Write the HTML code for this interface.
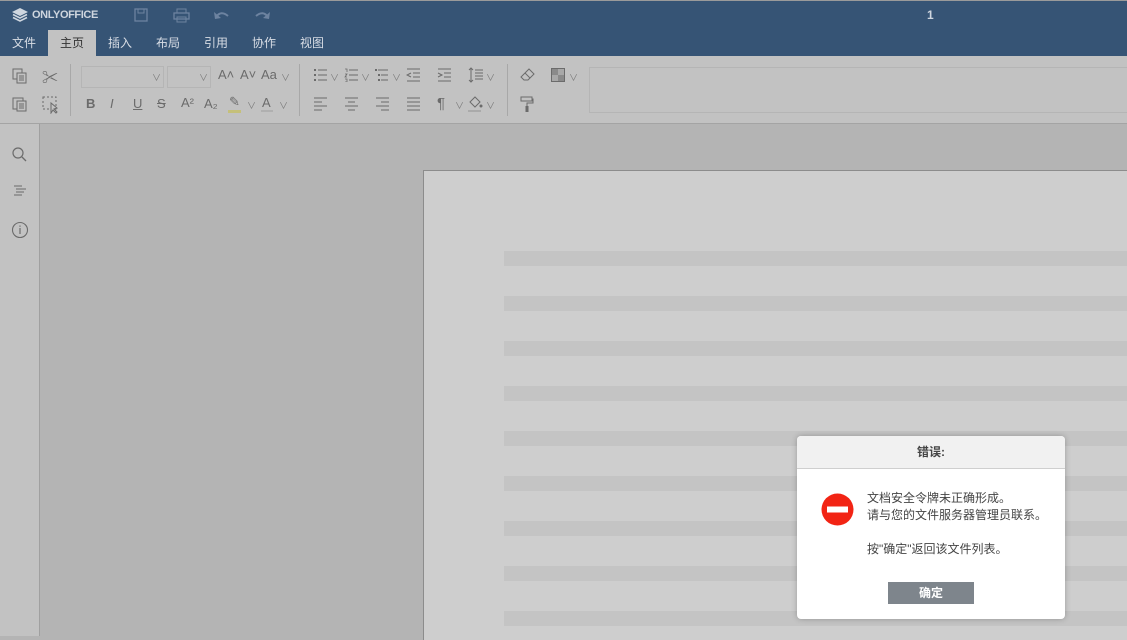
<!DOCTYPE html>
<html><head><meta charset="utf-8"><style>
*{margin:0;padding:0;box-sizing:border-box}
body{width:1127px;height:636px;overflow:hidden;position:relative;background:#b4b4b4;font-family:"Liberation Sans","Noto Sans CJK SC",sans-serif}
.hdr{position:absolute;left:0;top:0;width:1127px;height:56px;background:#365475;border-top:1px solid #9a9a9a}
.logo{position:absolute;left:12px;top:7px;color:#cfd6df;font-weight:bold;font-size:11px;letter-spacing:-0.4px;display:flex;align-items:center;gap:4px}
.tabs{position:absolute;left:0;top:29px;height:27px;display:flex}
.tab{width:48px;text-align:center;line-height:27px;font-size:12px;color:#d8dde5}
.tab.act{background:#c2c2c2;color:#333}
.num{position:absolute;left:927px;top:7px;color:#cfd6df;font-size:12px;font-weight:bold}
.tb{position:absolute;left:0;top:56px;width:1127px;height:68px;background:#c2c2c2;border-bottom:1px solid #a4a4a4}
.ic{position:absolute;color:#6b6b6b;font-size:13px}
.sv{position:absolute}
.sep{position:absolute;width:1px;height:52px;background:#a8a8a8}
.box{position:absolute;border:1px solid #b5b5b5;background:#c2c2c2}
.left{position:absolute;left:0;top:124px;width:40px;height:512px;background:#c2c2c2;border-right:1px solid #a0a0a0}
.page{position:absolute;left:423px;top:170px;width:710px;height:470px;background:#cecece;border-left:1px solid #8c8c8c;border-top:1px solid #8c8c8c}
.stripe{position:absolute;left:504px;width:623px;height:15px;background:#c4c4c4}
.dlg{position:absolute;left:797px;top:436px;width:268px;height:183px;background:#fff;border-radius:4px;box-shadow:0 0 6px rgba(0,0,0,.25);overflow:hidden}
.dh{height:33px;background:#f1f1f1;border-bottom:1px solid #cfcfcf;text-align:center;line-height:33px;font-size:12px;font-weight:bold;color:#444}
.msg{position:absolute;left:70px;top:54px;font-size:12px;color:#444;line-height:17px}
.btn{position:absolute;left:91px;top:146px;width:86px;height:22px;background:#7e858c;color:#fff;font-size:12px;font-weight:bold;text-align:center;line-height:22px}
.dd{position:absolute;color:#7a7a7a;font-size:9px}
</style></head><body>
<div class="hdr">
 <div class="logo"><svg width="16" height="14" viewBox="0 0 16 14"><path d="M8 0L16 4 8 8 0 4Z" fill="#cfd6df"/><path d="M1 6.5L8 10 15 6.5M1 9.5L8 13 15 9.5" stroke="#cfd6df" stroke-width="1.6" fill="none"/></svg>ONLYOFFICE</div>
 <svg style="position:absolute;left:134px;top:7px" width="14" height="14"><rect x="1" y="1" width="12" height="12" fill="none" stroke="#6d83a0" stroke-width="1.3"/><rect x="4" y="1" width="6" height="4" fill="none" stroke="#6d83a0"/></svg>
 <svg style="position:absolute;left:173px;top:7px" width="17" height="15"><rect x="4" y="1" width="9" height="4" fill="none" stroke="#6d83a0"/><rect x="1" y="5" width="15" height="6" fill="none" stroke="#6d83a0" stroke-width="1.3"/><rect x="4" y="9" width="9" height="5" fill="none" stroke="#6d83a0"/></svg>
 <svg style="position:absolute;left:214px;top:9px" width="16" height="10"><path d="M2 7Q7 0 14 6" stroke="#6d83a0" stroke-width="2" fill="none"/><path d="M0 2L1 9 7 8Z" fill="#6d83a0"/></svg>
 <svg style="position:absolute;left:254px;top:9px" width="16" height="10"><path d="M14 7Q9 0 2 6" stroke="#6d83a0" stroke-width="2" fill="none"/><path d="M16 2L15 9 9 8Z" fill="#6d83a0"/></svg>
 <div class="num">1</div>
 <div class="tabs"><div class="tab">文件</div><div class="tab act">主页</div><div class="tab">插入</div><div class="tab">布局</div><div class="tab">引用</div><div class="tab">协作</div><div class="tab">视图</div></div>
</div>
<div class="tb">
 <div class="box" style="left:81px;top:10px;width:83px;height:22px"></div>
 <div class="box" style="left:167px;top:10px;width:44px;height:22px"></div>
 <div class="box" style="left:589px;top:11px;width:560px;height:46px"></div>
 <svg class="sv" style="left:12px;top:12px" width="16" height="16"><rect x="1" y="1" width="9" height="10" fill="none" stroke="#6b6b6b"/><rect x="5" y="5" width="9" height="10" fill="#c2c2c2" stroke="#6b6b6b"/><path d="M7 8H12M7 10H12M7 12H12" stroke="#6b6b6b"/></svg>
 <span class="ic" style="left:42px;top:8px;font-size:16px">✂</span>
 <svg class="sv" style="left:12px;top:40px" width="16" height="16"><rect x="1" y="2" width="10" height="11" fill="none" stroke="#6b6b6b"/><rect x="5" y="5" width="9" height="10" fill="#c2c2c2" stroke="#6b6b6b"/><path d="M7 8H12M7 10H12M7 12H12" stroke="#6b6b6b"/></svg>
 <svg class="sv" style="left:42px;top:40px" width="18" height="18"><rect x="1" y="1" width="13" height="12" fill="none" stroke="#6b6b6b" stroke-dasharray="2 2"/><path d="M9 7L9 17 11 14 14 17 15 16 12 13 15 12Z" fill="#c2c2c2" stroke="#6b6b6b"/></svg>
 <span class="dd" style="left:152px;top:15px">∨</span><span class="dd" style="left:199px;top:15px">∨</span>
 <span class="ic" style="left:218px;top:11px">A˄</span><span class="ic" style="left:240px;top:11px">A˅</span><span class="ic" style="left:261px;top:11px">Aa</span><span class="dd" style="left:281px;top:15px">∨</span>
 <span class="ic" style="left:86px;top:40px;font-weight:bold">B</span><span class="ic" style="left:110px;top:40px;font-style:italic">I</span><span class="ic" style="left:133px;top:40px;text-decoration:underline">U</span><span class="ic" style="left:157px;top:40px;text-decoration:line-through">S</span><span class="ic" style="left:181px;top:39px">A²</span><span class="ic" style="left:204px;top:40px">A₂</span>
 <span class="ic" style="left:229px;top:38px">✎</span><div style="position:absolute;left:228px;top:54px;width:13px;height:3px;background:#c5c07a"></div><span class="dd" style="left:247px;top:43px">∨</span>
 <span class="ic" style="left:262px;top:39px">A</span><div style="position:absolute;left:261px;top:54px;width:12px;height:2px;background:#b0b0b0"></div><span class="dd" style="left:279px;top:43px">∨</span>
 <div class="sep" style="left:70px;top:8px"></div><div class="sep" style="left:299px;top:8px"></div><div class="sep" style="left:507px;top:8px"></div>
 <svg class="sv" style="left:313px;top:12px" width="14" height="14"><path d="M1 2h2M1 7h2M1 12h2" stroke="#6b6b6b" stroke-width="2"/><path d="M5 2H14M5 7H14M5 12H14" stroke="#6b6b6b"/></svg><span class="dd" style="left:330px;top:15px">∨</span>
 <svg class="sv" style="left:344px;top:12px" width="14" height="14"><path d="M1 1h2v3M1 6h2l-2 3h2M1 11h2v3H1" stroke="#6b6b6b" fill="none" stroke-width=".8"/><path d="M5 2H14M5 7H14M5 12H14" stroke="#6b6b6b"/></svg><span class="dd" style="left:361px;top:15px">∨</span>
 <svg class="sv" style="left:374px;top:12px" width="14" height="14"><path d="M1 2h2M4 7h2M4 12h2" stroke="#6b6b6b" stroke-width="2"/><path d="M4 2H14M7 7H14M7 12H14" stroke="#6b6b6b"/></svg><span class="dd" style="left:392px;top:15px">∨</span>
 <svg class="sv" style="left:406px;top:12px" width="14" height="14"><path d="M1 1H14M7 5H14M7 9H14M1 13H14" stroke="#6b6b6b"/><path d="M5 5L1 7 5 9" stroke="#6b6b6b" fill="none"/></svg>
 <svg class="sv" style="left:437px;top:12px" width="14" height="14"><path d="M1 1H14M7 5H14M7 9H14M1 13H14" stroke="#6b6b6b"/><path d="M1 5L5 7 1 9" stroke="#6b6b6b" fill="none"/></svg>
 <svg class="sv" style="left:468px;top:11px" width="16" height="16"><path d="M3 1V15M1 3L3 1 5 3M1 13L3 15 5 13" stroke="#6b6b6b" fill="none"/><path d="M7 3H15M7 6H15M7 9H15M7 12H15" stroke="#6b6b6b"/></svg><span class="dd" style="left:486px;top:15px">∨</span>
 <svg class="sv" style="left:313px;top:41px" width="14" height="14"><path d="M1 1H14M1 5H9M1 9H14M1 13H9" stroke="#6b6b6b"/></svg>
 <svg class="sv" style="left:344px;top:41px" width="14" height="14"><path d="M1 1H14M4 5H11M1 9H14M4 13H11" stroke="#6b6b6b"/></svg>
 <svg class="sv" style="left:375px;top:41px" width="14" height="14"><path d="M1 1H14M6 5H14M1 9H14M6 13H14" stroke="#6b6b6b"/></svg>
 <svg class="sv" style="left:406px;top:41px" width="14" height="14"><path d="M1 1H14M1 5H14M1 9H14M1 13H14" stroke="#6b6b6b"/></svg>
 <span class="ic" style="left:437px;top:39px;font-size:15px">¶</span><span class="dd" style="left:455px;top:43px">∨</span>
 <svg class="sv" style="left:467px;top:39px" width="16" height="18"><path d="M3 7L8 2 13 7 8 12Z" fill="none" stroke="#6b6b6b"/><circle cx="14" cy="11" r="1.5" fill="#6b6b6b"/><path d="M1 16H14" stroke="#aaa" stroke-width="2"/></svg><span class="dd" style="left:486px;top:43px">∨</span>
 <svg class="sv" style="left:520px;top:12px" width="15" height="14"><path d="M9 1L14 6 8 12H4L1 9Z" fill="none" stroke="#6b6b6b"/><path d="M5 5L10 10" stroke="#6b6b6b"/></svg>
 <svg class="sv" style="left:551px;top:12px" width="14" height="14"><rect x=".5" y=".5" width="13" height="13" fill="#8a8a8a" stroke="#6b6b6b"/><rect x="7" y="1" width="6" height="6" fill="#a8a8a8"/><rect x="1" y="7" width="6" height="6" fill="#a8a8a8"/></svg><span class="dd" style="left:569px;top:15px">∨</span>
 <svg class="sv" style="left:520px;top:40px" width="14" height="16"><rect x="1" y="1" width="11" height="4" fill="none" stroke="#6b6b6b"/><path d="M12 3H13V7H7V10" stroke="#6b6b6b" fill="none"/><rect x="5.5" y="10" width="3" height="6" fill="#6b6b6b"/></svg>
</div>
<div class="left">
 <svg style="position:absolute;left:12px;top:23px" width="16" height="16"><circle cx="6" cy="6" r="5" fill="none" stroke="#6b6b6b" stroke-width="1.2"/><path d="M10 10L14 14" stroke="#6b6b6b" stroke-width="1.3"/></svg>
 <svg style="position:absolute;left:13px;top:61px" width="14" height="12"><path d="M1 1H9M3 4H13M3 7H11M1 10H9" stroke="#6b6b6b" stroke-width="1"/></svg>
 <svg style="position:absolute;left:11px;top:97px" width="18" height="18"><circle cx="9" cy="9" r="7.5" fill="none" stroke="#6b6b6b" stroke-width="1.1"/><path d="M9 7V13M9 4.5V5.8" stroke="#6b6b6b" stroke-width="1.2"/></svg>
</div>
<div class="page"></div>
<div class="stripe" style="top:251px"></div><div class="stripe" style="top:296px"></div><div class="stripe" style="top:341px"></div><div class="stripe" style="top:386px"></div><div class="stripe" style="top:431px"></div><div class="stripe" style="top:476px"></div><div class="stripe" style="top:521px"></div><div class="stripe" style="top:566px"></div><div class="stripe" style="top:611px"></div>
<div class="dlg">
 <div class="dh">错误:</div>
 <svg style="position:absolute;left:24px;top:57px" width="33" height="33"><circle cx="16.5" cy="16.5" r="16" fill="#f22414"/><rect x="6" y="13.5" width="21" height="6" fill="#fff"/></svg>
 <div class="msg">文档安全令牌未正确形成。<br>请与您的文件服务器管理员联系。<br><br>按"确定"返回该文件列表。</div>
 <div class="btn">确定</div>
</div>
</body></html>
